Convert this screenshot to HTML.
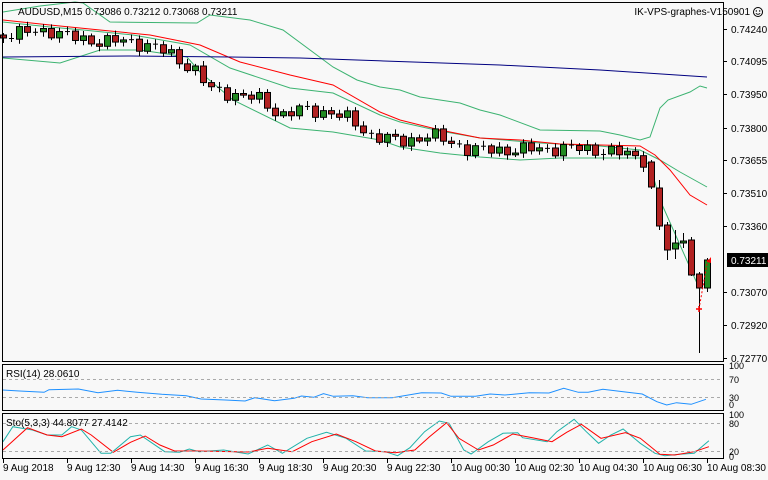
<!DOCTYPE html>
<html><head><meta charset="utf-8"><style>
html,body{margin:0;padding:0;background:#f8f8f8;width:768px;height:480px;overflow:hidden;font-family:"Liberation Sans",sans-serif;}
svg{display:block}
text{font-family:"Liberation Sans",sans-serif;font-size:10px;fill:#000}
</style></head><body>
<svg id="s" width="768" height="480" xmlns="http://www.w3.org/2000/svg">
<rect width="768" height="480" fill="#f8f8f8"/>
<g id="bb" fill="none" stroke-width="1"></g>
<g id="cd"></g>
<g fill="none" stroke="#000" stroke-width="1">
<rect x="2.5" y="2.5" width="721" height="359"/>
<rect x="2.5" y="364.5" width="721" height="46"/>
<rect x="2.5" y="413.5" width="721" height="45"/>
</g>
<g stroke="#aaa" stroke-dasharray="3,3"><line x1="3" y1="379.5" x2="723" y2="379.5"/><line x1="3" y1="397.5" x2="723" y2="397.5"/><line x1="3" y1="423.5" x2="723" y2="423.5"/><line x1="3" y1="451.5" x2="723" y2="451.5"/></g>
<text x="18" y="15">AUDUSD,M15  0.73086 0.73212 0.73068 0.73211</text>
<text x="750" y="15" text-anchor="end">IK-VPS-graphes-V150901</text>
<circle cx="758" cy="12" r="4.5" fill="none" stroke="#000"/><circle cx="756.3" cy="11" r=".7"/><circle cx="759.7" cy="11" r=".7"/><path d="M755.8 13.3q2.2 2 4.4 0" fill="none" stroke="#000" stroke-width=".8"/>
<g id="ax"></g>
<rect x="727" y="253" width="41" height="14" fill="#000"/>
<text x="731" y="264" style="fill:#fff">0.73211</text>
<text x="6" y="377">RSI(14) 28.0610</text>
<text x="6" y="426">Sto(5,3,3) 44.8077 27.4142</text>
<g>
<text x="729" y="369" style="font-size:9px">100</text><text x="729" y="383" style="font-size:9px">70</text><text x="729" y="401" style="font-size:9px">30</text><text x="729" y="408" style="font-size:9px">0</text>
<text x="729" y="418" style="font-size:9px">100</text><text x="729" y="427" style="font-size:9px">80</text><text x="729" y="455" style="font-size:9px">20</text><text x="729" y="460" style="font-size:9px">0</text>
</g>
<g id="tm"></g>
</svg>
<script>
var NS="http://www.w3.org/2000/svg";
function el(p,t,a){var e=document.createElementNS(NS,t);for(var k in a)e.setAttribute(k,a[k]);document.getElementById(p).appendChild(e);return e;}
function pl(p,pts,c,sx,sy,ox,oy){sx=sx||1;sy=sy||1;ox=ox||0;oy=oy||0;var d=pts.map(function(q){return (ox+q[0]/sx).toFixed(1)+','+(oy+q[1]/sy).toFixed(1)}).join(' ');el(p,'polyline',{points:d,stroke:c,fill:'none','stroke-width':1});}
pl('bb',[[3,12],[40,6],[75,2],[83,3],[110,22],[197,23],[210,15],[250,20],[283,30],[333,67],[357,80],[380,87],[400,90],[420,97],[460,103],[480,110],[500,115],[540,130],[600,131],[620,135],[640,140],[650,137],[660,108],[668,100],[690,92],[700,86],[707,88]],'#3cb371');
pl('bb',[[3,22],[50,27],[83,30],[133,35],[190,45],[230,68],[290,88],[333,93],[380,115],[400,122],[440,131],[480,138],[540,143],[600,146],[640,150],[660,160],[680,172],[707,187]],'#3cb371');
pl('bb',[[3,20],[50,25],[100,30],[150,35],[200,45],[240,62],[290,75],[333,85],[380,112],[400,120],[440,130],[480,138],[520,140],[560,144],[640,146],[655,155],[670,170],[690,195],[707,205]],'#ff0000');
pl('bb',[[3,58],[60,63],[100,50],[140,50],[187,57],[200,72],[233,100],[290,128],[333,132],[380,140],[400,147],[440,153],[480,157],[520,160],[560,158],[640,158],[650,165],[660,200],[680,245],[700,290]],'#3cb371');
pl('bb',[[3,57],[130,56],[230,57],[300,58],[384,61],[500,65],[600,70],[707,77]],'#000080');
var tr=[[3,35],[50,30],[80,40],[130,42],[150,45],[170,55],[195,70],[210,90],[240,95],[260,100],[280,115],[300,110],[330,112],[350,120],[370,135],[400,142],[430,135],[450,142],[470,150],[520,150],[560,148],[600,150],[630,155],[645,160]];
function mid(x){for(var i=0;i<tr.length-1;i++){if(x<=tr[i+1][0]){var f=(x-tr[i][0])/(tr[i+1][0]-tr[i][0]);return tr[i][1]+f*(tr[i+1][1]-tr[i][1]);}}return tr[tr.length-1][1];}
var C=[];var prev=mid(3);
for(var i=0;i<81;i++){var x=3+8*i;var c=mid(x)+5*Math.sin(i*2.3)+3*Math.cos(i*1.1);var o=prev;C.push([x,o,c,Math.min(o,c)-2-3*Math.abs(Math.sin(i*1.7)),Math.max(o,c)+2+3*Math.abs(Math.cos(i*1.3))]);prev=c;}
C.push([651,162,187,160,189],[659,188,226,180,230],[667,225,250,222,260],[675,249,243,230,259],[683,243,241,233,248],[691,240,275,237,276],[699,274,288,272,353],[707,288,260,258,292]);
C.forEach(function(q){var x=q[0],o=q[1],c=q[2],t=Math.min(o,c),b=Math.max(o,c);
el('cd','line',{x1:x+.5,y1:q[3],x2:x+.5,y2:q[4],stroke:'#000'});
if(b-t<1.5){el('cd','line',{x1:x-2,y1:t+.5,x2:x+3,y2:t+.5,stroke:'#000'});}
else el('cd','rect',{x:x-2.5,y:t,width:6,height:b-t,fill:c<o?'#228b22':'#b22222',stroke:'#000','stroke-width':1});});
el('cd','path',{d:'M696 309h6M699 306v6',stroke:'#f00','stroke-width':1.5});
el('cd','line',{x1:699,y1:309,x2:708,y2:258,stroke:'#f00','stroke-dasharray':'2,2'});
el('cd','path',{d:'M707 262l4-5l0 6z',fill:'#f00'});
pl('bb',[[5,105],[40,108],[90,112],[100,104],[160,102],[200,113],[240,106],[280,112],[330,118],[380,122],[410,132],[460,135],[500,138],[520,128],[560,137],[600,130],[615,123],[640,127],[660,116],[680,124],[720,122],[750,128],[800,128],[860,113],[900,114],[920,124],[970,124],[1000,117],[1030,120],[1080,113],[1120,114],[1150,100],[1180,112],[1200,112],[1230,103],[1280,112],[1310,117],[1340,140],[1360,150],[1380,143],[1410,148],[1440,133]],'#1e90ff',2.04,3,0,355);
pl('bb',[[0,260],[20,215],[60,225],[90,240],[120,240],[140,215],[160,225],[200,295],[220,295],[260,245],[280,240],[300,260],[330,290],[360,292],[380,282],[400,290],[450,285],[500,297],[540,270],[570,295],[620,250],[660,232],[700,250],[740,288],[780,290],[805,302],[830,278],[860,230],[890,198],[910,205],[940,285],[955,297],[990,260],[1020,235],[1050,233],[1060,248],[1110,260],[1130,230],[1165,193],[1190,230],[1215,265],[1240,240],[1265,222],[1300,265],[1330,295],[1350,302],[1380,298],[1410,295],[1440,257]],'#20b2aa',2.04,3,3,355);
pl('bb',[[0,285],[50,218],[90,240],[120,245],[160,222],[180,240],[225,292],[260,262],[290,243],[320,270],[350,288],[400,288],[500,291],[540,280],[590,290],[630,260],[680,237],[720,260],[760,288],[800,293],[840,285],[870,245],[905,203],[930,250],[970,285],[1000,270],[1040,237],[1080,248],[1120,260],[1150,232],[1180,208],[1220,250],[1270,233],[1300,250],[1340,298],[1370,300],[1410,290],[1440,275]],'#ff0000',2.04,3,3,355);
[["0.74240",29],["0.74095",61],["0.73950",94],["0.73800",128],["0.73655",160],["0.73510",193],["0.73360",226],["0.73070",292],["0.72920",325],["0.72770",358]].forEach(function(p){el('ax','line',{x1:723,y1:p[1]+.5,x2:727,y2:p[1]+.5,stroke:'#000'});var t=el('ax','text',{x:731,y:p[1]+4});t.textContent=p[0];});
["9 Aug 2018","9 Aug 12:30","9 Aug 14:30","9 Aug 16:30","9 Aug 18:30","9 Aug 20:30","9 Aug 22:30","10 Aug 00:30","10 Aug 02:30","10 Aug 04:30","10 Aug 06:30","10 Aug 08:30"].forEach(function(l,i){var x=3+64*i;el('tm','line',{x1:x+.5,y1:459,x2:x+.5,y2:463,stroke:'#000'});var t=el('tm','text',{x:x,y:471});t.textContent=l;});
</script>
</body></html>
